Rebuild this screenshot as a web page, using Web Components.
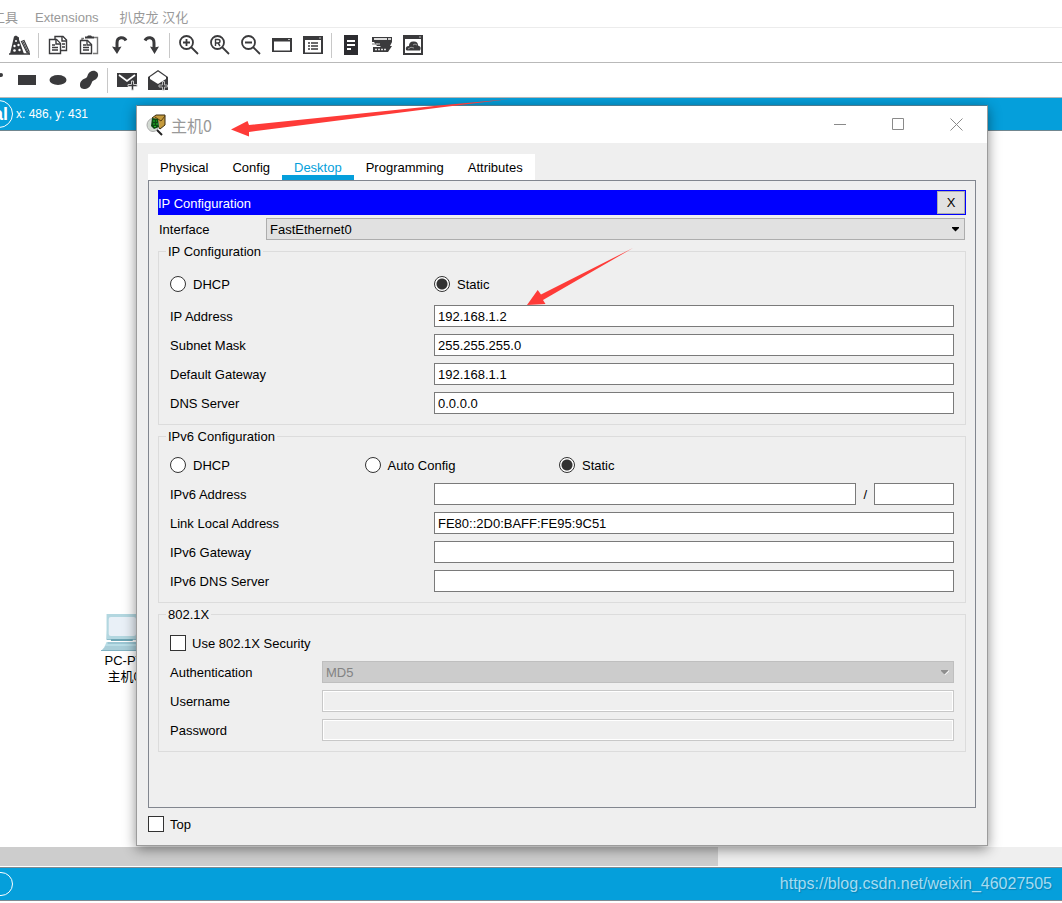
<!DOCTYPE html>
<html lang="zh-CN">
<head>
<meta charset="utf-8">
<title>主机0</title>
<style>
  body{margin:0;background:#fff;color:#000;font:13px/15px "Liberation Sans","Noto Sans CJK SC",sans-serif}
</style>
</head>
<body>
<sim-app>
  <sim-menu slot="top"></sim-menu>
  <tool-bar slot="top" icons="cone | copy paste undo redo | zoomin zoomreset zoomout window list | note devices cloud"></tool-bar>
  <tool-bar slot="top" class="shapes" icons="line rect ellipse free | mail mailopen"></tool-bar>
  <view-bar slot="top"></view-bar>
  <pc-node style="left:92px;top:482px" model="PC-PT" name="主机0"></pc-node>
  <scroll-track slot="bottom"></scroll-track>
  <status-bar slot="bottom">https://blog.csdn.net/weixin_46027505</status-bar>
  <device-window slot="window" title="主机0">
    <tab-strip tabs="Physical,Config,Desktop,Programming,Attributes" active="Desktop"></tab-strip>
    <desktop-panel heading="IP Configuration">
      <form-field type="select" label="Interface" value="FastEthernet0" class="iface"></form-field>
      <group-box legend="IP Configuration" class="tall">
        <radio-row options="DHCP,Static" checked="Static" class="two"></radio-row>
        <form-field label="IP Address" value="192.168.1.2"></form-field>
        <form-field label="Subnet Mask" value="255.255.255.0"></form-field>
        <form-field label="Default Gateway" value="192.168.1.1"></form-field>
        <form-field label="DNS Server" value="0.0.0.0"></form-field>
      </group-box>
      <group-box legend="IPv6 Configuration">
        <radio-row options="DHCP,Auto Config,Static" checked="Static" class="three"></radio-row>
        <form-field label="IPv6 Address" value="" prefix></form-field>
        <form-field label="Link Local Address" value="FE80::2D0:BAFF:FE95:9C51"></form-field>
        <form-field label="IPv6 Gateway" value=""></form-field>
        <form-field label="IPv6 DNS Server" value=""></form-field>
      </group-box>
      <group-box legend="802.1X" class="narrow">
        <check-box>Use 802.1X Security</check-box>
        <form-field type="select" label="Authentication" value="MD5" disabled></form-field>
        <form-field label="Username" value="" disabled></form-field>
        <form-field type="password" label="Password" value="" disabled></form-field>
      </group-box>
    </desktop-panel>
    <check-box>Top</check-box>
  </device-window>
  <arrow-marks slot="window"></arrow-marks>
</sim-app>

<script>
// Toolbar icons, all on a 24 x 24 grid
const ICONS = {
  cone: `<path d="M6 3.500l2-1 3 2v2l5 14.500H2z"/><path d="M1 21h21" stroke="#3a3a3c" stroke-width="1.500"/><g fill="#fff"><circle cx="8" cy="8" r="1"/><circle cx="10.500" cy="12" r="1.200"/><circle cx="6.500" cy="13" r="1.200"/><circle cx="11.500" cy="17" r="1.200"/><circle cx="6.500" cy="17.500" r="1.300"/></g><path d="M13.500 8.500l2.500-1 5 11v2l-2-1z" fill="#fff" stroke="#3a3a3c" stroke-width="1.200"/><path d="M15 8.500l5 11" stroke="#3a3a3c"/>`,
  copy: `<g fill="#fff" stroke="#3a3a3c" stroke-width="1.400"><path d="M9 3.500h8l3.500 3.500v10.500H9z"/><path d="M16 4v4h4"/><path d="M3.500 6.500h7l4 4v10h-11z"/><path d="M10 7v4h4"/></g><path d="M6 12h3M6 14.500h6M6 17h6M16 11h3M16 14h3" stroke="#3a3a3c" stroke-width="1.300"/>`,
  paste: `<path d="M7 5.500H5v2M17 4.500h3.500v16H16" fill="none" stroke="#777" stroke-width="1.400"/><path d="M8 3.500h2l1-1h3l1 1h2v2H8z"/><path d="M3.500 7.500h7l4 4v9h-11z" fill="#fff" stroke="#3a3a3c" stroke-width="1.400"/><path d="M10 8v4h4M6 12h3M6 14.500h6M6 17h6" fill="none" stroke="#3a3a3c" stroke-width="1.300"/>`,
  undo: `<path d="M18 7.500C16 3.500 9 3.500 9 10v5" fill="none" stroke="#3a3a3c" stroke-width="3"/><path d="M4 13.500l5 1 4.500-1L9 21z"/>`,
  redo: `<path d="M6 7.500C8 3.500 15 3.500 15 10v5" fill="none" stroke="#3a3a3c" stroke-width="3"/><path d="M11 13.500l4.500 1 4.500-1L15.500 21z"/>`,
  zoomin: `<circle cx="9.500" cy="9.500" r="6.500" fill="none" stroke="#3a3a3c" stroke-width="1.800"/><path d="M14 14l7 7M6 9.500h7M9.500 6v7" fill="none" stroke="#3a3a3c" stroke-width="1.800"/>`,
  zoomreset: `<circle cx="9.500" cy="9.500" r="6.500" fill="none" stroke="#3a3a3c" stroke-width="1.800"/><path d="M14 14l7 7" stroke="#3a3a3c" stroke-width="1.800"/><path d="M7.500 13V6.500h2.500q2 0 2 1.700T10 10H7.500M10 10l2 3" fill="none" stroke="#3a3a3c" stroke-width="1.400"/>`,
  zoomout: `<circle cx="9.500" cy="9.500" r="6.500" fill="none" stroke="#3a3a3c" stroke-width="1.800"/><path d="M14 14l7 7M6 9.500h7" fill="none" stroke="#3a3a3c" stroke-width="1.800"/>`,
  window: `<path d="M2 5h20v14H2zM4 8.500v9h16v-9z" fill-rule="evenodd"/><path d="M18 6.500h2" stroke="#bbb"/>`,
  list: `<path d="M2 3h20v18H2zM4 7v12.500h16V7z" fill-rule="evenodd"/><path d="M18 5h2" stroke="#bbb"/><path d="M7 10h2M10 10h7M7 13h2M10 13h7M7 16h2M10 16h7" stroke="#3a3a3c" stroke-width="1.600"/>`,
  note: `<path d="M5 2h14v20H5z" fill="#2c2c30"/><path d="M8 8h8M8 12h8M8 16h4" stroke="#fff" stroke-width="1.800"/>`,
  devices: `<path d="M2 4h20v5H2z"/><path d="M4 6h13" stroke="#ddd" stroke-width="2"/><path d="M18 5h3v2h-3z" fill="#ccc"/><path d="M4 9h18l-2 4H7z"/><path d="M3 10v2m2-2v2m2-2v2" stroke="#777"/><path d="M7 10v2m2-2v2" stroke="#ddd"/><path d="M10 13h12l-4 6h-3z"/><path d="M3 14h15v5H3z"/><path d="M5 16.500h2m1 0h2m1 0h2m1 0h2" stroke="#ddd" stroke-width="1.500"/>`,
  cloud: `<path d="M2 2h20v20H2zM4 6v14h16V6z" fill-rule="evenodd"/><path d="M18 4h2" stroke="#bbb"/><path d="M5 17q-1-4 3-4 0-5 5-4.500 4 0 4 4 4 1 2 5H6z"/><path d="M7 16q3-3 6-1m-1-3q2-2 4 0" fill="none" stroke="#999"/>`,
  line: `<path d="M4 19L17 7" stroke="#3a3a3c" stroke-width="2"/><circle cx="17" cy="7" r="2"/>`,
  rect: `<path d="M3 7h18v10H3z"/>`,
  ellipse: `<ellipse cx="12" cy="12" rx="8.500" ry="5"/>`,
  free: `<path d="M3 17c0-4 3-6 6-7 2-1 1-4 4-6 4-3 9 0 8 4-1 4-5 4-6 6-1 3-3 7-7 7-3 0-5-1-5-4z"/>`,
  mail: `<path d="M2 5h20v14H2z"/><path d="M4 7l8 6 8-6" fill="none" stroke="#fff" stroke-width="1.700"/><path d="M16.500 13h2v3.500h3.500v2h-3.500V22h-2v-3.500H13v-2h3.500z" stroke="#ccc"/>`,
  mailopen: `<path d="M2 9l10-7 10 7v13H2z"/><path d="M4 9l8-5.500L20 9v2l-8 5-8-5z" fill="#fff"/><path d="M16.500 13.500h2V17h3v2h-3v3h-2v-3H13v-2h3.500z" stroke="#bbb"/>`
};

// Small base class: open shadow root filled from the html() of each element
class Base extends HTMLElement {
  constructor() { super(); this.attachShadow({ mode: "open" }); }
  connectedCallback() {
    this.shadowRoot.innerHTML = `<style>:host,*,*::before,*::after{box-sizing:border-box}${this.css()}</style>${this.html()}`;
  }
  attr(n) { return this.getAttribute(n) || ""; }
}

customElements.define("sim-app", class extends Base {
  css() { return `
    :host{display:flex;flex-direction:column;min-height:100vh;position:relative;overflow:hidden}
    main{flex:1;position:relative;min-height:716px}`; }
  html() { return `<slot name="top"></slot><main><slot></slot></main><slot name="bottom"></slot><slot name="window"></slot>`; }
});

customElements.define("sim-menu", class extends Base {
  css() { return `
    :host{display:block;height:28px;border-bottom:1px solid #ececec;color:#999}
    nav{display:flex;gap:21px;margin-left:-8px;padding-top:10px}
    button{font:inherit;color:inherit;background:none;border:0;padding:0;white-space:nowrap}
    button:first-child{margin-right:-4px}`; }
  html() { return `<nav><button>工具</button><button>Extensions</button><button>扒皮龙 汉化</button></nav>`; }
});

customElements.define("tool-bar", class extends Base {
  css() { return `
    :host{display:flex;height:35px;padding-left:4px;border-bottom:1px solid #b9b9b9;overflow:hidden}
    :host(.shapes) button:first-of-type{margin-left:-24px}
    button{flex:none;width:31px;height:34px;padding:0;border:0;background:none;display:grid;place-items:center}
    svg{width:24px;height:24px;fill:#3a3a3c;display:block}
    i{flex:none;width:1px;height:25px;margin:5px 3px;background:#c8c8c8}`; }
  html() {
    return this.attr("icons").split(" ").map((n) => n === "|" ? "<i></i>"
      : `<button aria-label="${n}"><svg viewBox="0 0 24 24">${ICONS[n]}</svg></button>`).join("");
  }
});

customElements.define("view-bar", class extends Base {
  css() { return `
    :host{display:flex;align-items:center;gap:3px;height:33px;background:#059fdb;border-bottom:1px solid #70868f;color:#fff;font-size:12px}
    button{width:80px;height:28px;margin-left:-67px;padding:0 4px;border:1px solid #fff;border-radius:14px;background:none;color:#fff;font:bold 18px/20px "Liberation Sans",sans-serif;text-align:right}`; }
  html() { return `<button>Logical</button><span>x: 486, y: 431</span>`; }
});

customElements.define("pc-node", class extends Base {
  css() { return `
    :host{position:absolute;display:flex;flex-direction:column;align-items:center;width:64px;line-height:16px}
    svg{width:48px;height:40px}`; }
  html() { return `<svg viewBox="0 0 44 40" preserveAspectRatio="none">
    <path d="M7 2h31l2 25H6z" fill="#8dbcca"/><path d="M6 1h30v25H6z" fill="#b3d7e0"/><rect x="8" y="4" width="25" height="19" rx="2" fill="#e9f0f7"/>
    <path d="M10 26h20v2H10z" fill="#6da5b4"/><path d="M6 29h30l4 3-2 2H4z" fill="#b9dde6"/><path d="M7 30h29" stroke="#7fb0bf"/>
    <path d="M5 33h35l3 5H1z" fill="#a9ced9"/><path d="M1 37h42v1H1z" fill="#82b3c2"/></svg>
    <span>${this.attr("model")}</span><span>${this.attr("name")}</span>`; }
});

customElements.define("scroll-track", class extends Base {
  css() { return `
    :host{display:block;height:20px;background:#efefef;border-bottom:1px solid #fff}
    div{width:67.6%;height:19px;background:#cdcdcd}`; }
  html() { return `<div></div>`; }
});

customElements.define("status-bar", class extends Base {
  css() { return `
    :host{display:flex;align-items:center;justify-content:space-between;height:34px;margin-bottom:2px;padding-right:10px;background:#059fdb;border:solid #7e8b92;border-width:1px 0;font-size:16px;line-height:20px;color:#a5dcf2}
    button{width:60px;height:24px;margin-left:-47px;border:1px solid #fff;border-radius:12px;background:none}
    span{text-shadow:1px 1px 1px #0783b5}`; }
  html() { return `<button aria-label="time"></button><span><slot></slot></span>`; }
});

customElements.define("device-window", class extends Base {
  css() { return `
    :host{position:absolute;top:105px;left:136px;right:74px;background:#efefef;border:1px solid #9c9c9c;border-top-color:#4c7b90;box-shadow:0 3px 12px rgba(0,0,0,.45)}
    header{display:flex;align-items:center;height:37px;padding:0 2px 0 9px;background:#fff;color:#999;font-size:16px;line-height:20px}
    .logo{width:20px;height:22px;margin-right:5px}
    h1{flex:1;margin:0;font-size:16px;font-weight:400;font-family:"Noto Sans CJK SC","Noto Sans",sans-serif}
    button{width:58px;height:37px;padding:0;border:0;background:none;display:grid;place-items:center}
    button svg{width:13px;height:13px;fill:none;stroke:#8a8a8a}
    section{display:flex;flex-direction:column;padding:11px 11px 10px}
    ::slotted(check-box){margin-top:5px}`; }
  html() { return `<header>
    <svg class="logo" viewBox="0 0 20 22"><path d="M6 4l4-3h9v10l-5 4z" fill="#c49a3c" stroke="#3b2d10"/><path d="M9 3l6 4 4-5" fill="none" stroke="#5a4012"/>
      <ellipse cx="7" cy="11" rx="6" ry="6.500" fill="#d3dad3" stroke="#aaa"/><path d="M6 4l6 1 1 8-5 2-3-3z" fill="#0d4a12"/><path d="M7 7h2m1 0h1M7 10h2m1 0h2M8 12.500h2" stroke="#21c32b" stroke-width="1.200"/><path d="M11 16l5 5" stroke="#222" stroke-width="2"/></svg>
    <h1>${this.attr("title")}</h1>
    <button aria-label="Minimize"><svg viewBox="0 0 13 13"><path d="M0 6.500h12"/></svg></button>
    <button aria-label="Maximize"><svg viewBox="0 0 13 13"><path d="M.5.5h11v11H.5z"/></svg></button>
    <button aria-label="Close"><svg viewBox="0 0 13 13"><path d="M.5.5l12 12m0-12l-12 12"/></svg></button>
    </header><section><slot></slot></section>`; }
});

customElements.define("tab-strip", class extends Base {
  css() { return `
    :host{display:flex}
    button{height:26px;padding:5px 12px 0;border:0;border-bottom:5px solid #fff;background:#fff;color:#000;font:inherit}
    .on{color:#059fdb;border-color:#059fdb}`; }
  html() {
    return this.attr("tabs").split(",").map((t) => `<button class="${t === this.attr("active") ? "on" : ""}">${t}</button>`).join("");
  }
});

customElements.define("desktop-panel", class extends Base {
  css() { return `
    :host{display:block;border:1px solid #82868f;padding:9px 9px 55px}
    header{display:flex;justify-content:space-between;align-items:center;height:25px;margin-bottom:3px;padding-right:1px;background:#00f;color:#fff}
    h2{margin:0;padding-top:1px;font:inherit}
    button{width:28px;height:23px;padding:0;border:1px solid #adadad;background:#e1e1e1;color:#000;font:inherit}
    ::slotted(group-box){margin-top:4px}`; }
  html() { return `<header><h2>${this.attr("heading")}</h2><button>X</button></header><slot></slot>`; }
});

customElements.define("group-box", class extends Base {
  css() { return `
    :host{display:block;--label:264px}
    :host(.narrow){--label:152px}
    fieldset{margin:0;padding:10px 11px;border:1px solid #dcdcdc;min-width:0}
    :host(.tall) fieldset{padding-top:14px}
    legend{margin-left:-4px;padding:0 2px}
    div{display:flex;flex-direction:column;gap:7px}
    :host(.tall) ::slotted(radio-row){margin-bottom:3px}`; }
  html() { return `<fieldset><legend>${this.attr("legend")}</legend><div><slot></slot></div></fieldset>`; }
});

customElements.define("form-field", class extends Base {
  css() { return `
    :host{display:grid;grid-template-columns:var(--label) 1fr;align-items:center}
    :host(.iface){--label:107px;padding:0 1px}
    .box{display:grid;grid-template-columns:1fr auto 80px;gap:7px;align-items:center}
    .pick{display:grid;align-items:center}
    .pick>*{grid-area:1/1}
    input,select{width:100%;height:22px;margin:0;padding:0 3px;border:1px solid #7a7a7a;border-radius:0;background:#fff;color:#000;font:inherit;appearance:none}
    select{background:#e1e1e1;border-color:#adadad}
    input:disabled{background:#efefef;border-color:#c8c8c8;box-shadow:inset 0 0 0 1px #fff}
    select:disabled{background:#ccc;border-color:#bfbfbf;color:#838383;opacity:1}
    svg{width:9px;height:5px;justify-self:end;margin-right:5px;pointer-events:none}`; }
  html() {
    const type = this.attr("type"), v = this.attr("value"), off = this.hasAttribute("disabled") ? "disabled" : "";
    const input = `<input id="f" type="${type || "text"}" value="${v}" ${off}>`;
    let ctl = input;
    if (type === "select") {
      ctl = `<div class="pick"><select id="f" ${off}><option>${v}</option></select>
        <svg viewBox="0 0 9 5">${off ? '<path d="M4.500 4.500L8.500 1" stroke="#fff" stroke-width="1.500"/>' : ""}<path d="M1 0h7v1L4.500 4.500 1 1z" fill="${off ? "#8e8e8e" : "#000"}"/></svg></div>`;
    } else if (this.hasAttribute("prefix")) {
      ctl = `<div class="box">${input}<span>/</span><input aria-label="Prefix length"></div>`;
    }
    return `<label for="f">${this.attr("label")}</label>${ctl}`;
  }
});

customElements.define("radio-row", class extends Base {
  css() { return `
    :host{display:grid;align-items:center;height:22px}
    :host(.two){grid-template-columns:var(--label) 1fr}
    :host(.three){grid-template-columns:1fr 1fr 2fr;padding-right:6px}
    label{display:flex;align-items:center;gap:7px}
    input{appearance:none;width:16px;height:16px;margin:0;border:1px solid #333;border-radius:50%;background:#fff}
    input:checked{background:radial-gradient(circle,#333 5px,#fff 6px)}`; }
  html() {
    return this.attr("options").split(",").map((o) =>
      `<label><input type="radio" name="mode" ${o === this.attr("checked") ? "checked" : ""}>${o}</label>`).join("");
  }
});

customElements.define("check-box", class extends Base {
  css() { return `
    :host{display:flex;align-items:center;height:22px}
    label{display:flex;align-items:center;gap:6px}
    input{appearance:none;width:16px;height:16px;margin:0;border:1px solid #333;background:#fff}`; }
  html() { return `<label><input type="checkbox"><span><slot></slot></span></label>`; }
});

// Red pointers laid over the window
customElements.define("arrow-marks", class extends Base {
  css() { return `
    :host{position:absolute;top:0;left:0;pointer-events:none}
    svg{display:block;width:700px;height:320px;fill:#fe3b38}`; }
  html() { return `<svg viewBox="0 0 700 320">
    <path d="M231 129.500L247.500 121l1.500 4 190-19.500L510 99l-70 8.500L249 132v4.500z"/>
    <path d="M527 305l10.700-15 3.300 4.500L633 248l-90 52 2.500 4z"/></svg>`; }
});
</script>
</body>
</html>
